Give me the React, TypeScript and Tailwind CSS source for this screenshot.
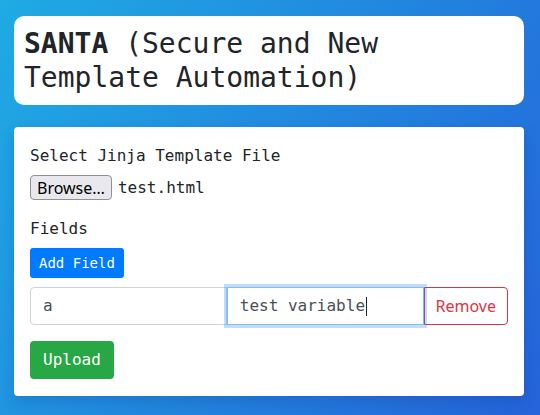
export default function App() {
  return (
    <div className="min-h-screen w-full bg-[linear-gradient(120deg,#1fabe3,#2563da)] pl-[14px] pr-[16px] pt-[16px] font-['DejaVu_Sans_Mono',monospace] text-[#212529]">
      <div className="rounded-[10px] bg-white px-[10px] py-[11px]">
        <h1 className="text-[28px] leading-[1.2] font-normal">
          <span className="font-bold">SANTA</span> (Secure and New Template Automation)
        </h1>
      </div>

      <div className="mt-[22px] rounded-[4px] bg-white px-4 pt-[17px] pb-[17px] shadow-[0_6px_14px_rgba(0,40,120,0.18)]">
        <label className="mb-[7px] block text-base leading-6">Select Jinja Template File</label>
        <div className="flex items-center gap-[6px]">
          <button className="flex h-[25px] items-center rounded-[4px] border border-[#8f8f9d] bg-[#e9e9ed] px-[6px] font-['Noto_Sans',sans-serif] text-base text-black">
            Browse…
          </button>
          <span className="text-base">test.html</span>
        </div>

        <label className="mt-[17px] mb-[7px] block text-base leading-6">Fields</label>
        <button className="h-[30px] rounded-[3px] bg-[#007bff] px-[9px] text-sm text-white">Add Field</button>

        <div className="mt-[9px] flex h-[38px]">
          <div className="flex flex-1 items-center rounded-l-[4px] border border-[#ced4da] px-3 text-base text-[#495057]">
            a
          </div>
          <div className="relative z-10 flex flex-1 items-center border border-[#80bdff] px-3 text-base text-[#495057] shadow-[0_0_0_3px_rgba(0,123,255,0.25)]">
            test variable
            <span className="ml-[1px] inline-block h-[19px] w-px bg-[#212529]" />
          </div>
          <button className="rounded-r-[4px] border border-[#dc3545] px-[11px] font-['Noto_Sans',sans-serif] text-base text-[#dc3545]">
            Remove
          </button>
        </div>

        <button className="mt-4 h-[38px] rounded-[4px] bg-[#28a745] px-[13px] text-base text-white">Upload</button>
      </div>
    </div>
  );
}
